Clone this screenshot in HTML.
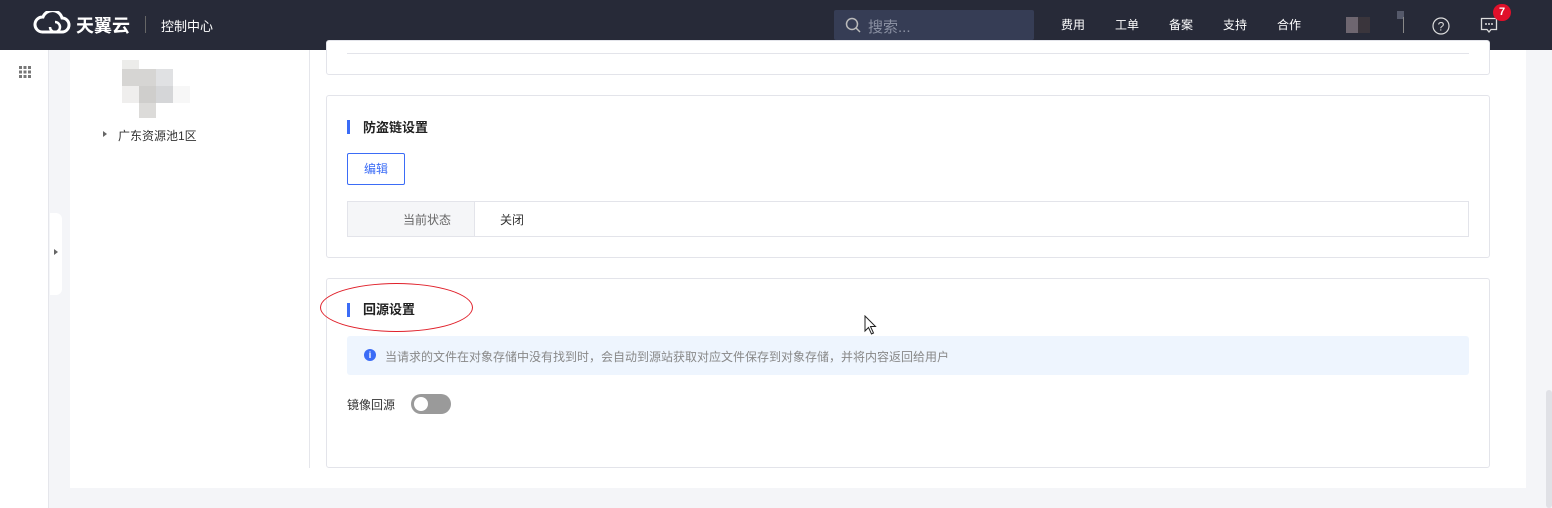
<!DOCTYPE html>
<html><head><meta charset="utf-8"><style>
*{box-sizing:border-box;margin:0;padding:0}
body{width:1552px;height:508px;overflow:hidden;background:#f4f5f8;font-family:"Liberation Sans","Noto Sans CJK SC",sans-serif;font-size:12px;color:#333;position:relative}
.a{position:absolute}
.hdr{left:0;top:0;width:1552px;height:50px;background:#272a38;color:#fff}
.box{border:1px solid #e3e4ea;border-radius:3px;background:#fff}
.t{font-size:13px;font-weight:bold;color:#222}
.bar{width:3px;height:14px;background:#3b6cf6}
</style></head><body>
<div class="a hdr">
 <svg class="a" style="left:32px;top:11px" width="40" height="24" viewBox="0 0 40 24"><path d="M10 21 H30 A7 7 0 0 0 30 7 A10 10 0 0 0 11 6 A7.5 7.5 0 0 0 10 21" fill="none" stroke="#fff" stroke-width="3"/><path d="M18 16 A5 5 0 1 0 23 11" fill="none" stroke="#fff" stroke-width="2.5"/></svg>
 <div class="a" style="left:76px;top:12px;font-size:18px;font-weight:bold">天翼云</div>
 <div class="a" style="left:145px;top:16px;width:1px;height:17px;background:#666"></div>
 <div class="a" style="left:161px;top:16px;font-size:13px">控制中心</div>
 <div class="a" style="left:834px;top:10px;width:200px;height:30px;background:#363d55;border-radius:2px"></div>
 <svg class="a" style="left:845px;top:17px" width="16" height="17"><circle cx="7" cy="7" r="5.5" fill="none" stroke="#bbb" stroke-width="1.5"/><line x1="11" y1="11" x2="15" y2="15" stroke="#bbb" stroke-width="1.5"/></svg>
 <div class="a" style="left:868px;top:16px;font-size:15px;color:#8a90a2">搜索...</div>
 <div class="a" style="left:1061px;top:16px;font-size:12px">费用</div>
 <div class="a" style="left:1115px;top:16px;font-size:12px">工单</div>
 <div class="a" style="left:1169px;top:16px;font-size:12px">备案</div>
 <div class="a" style="left:1223px;top:16px;font-size:12px">支持</div>
 <div class="a" style="left:1277px;top:16px;font-size:12px">合作</div>
 <div class="a" style="left:1346px;top:17px;width:12px;height:16px;background:#6e6670"></div>
 <div class="a" style="left:1358px;top:17px;width:12px;height:16px;background:#3a353c"></div>
 <div class="a" style="left:1397px;top:11px;width:7px;height:8px;background:#55596a"></div>
 <div class="a" style="left:1403px;top:17px;width:1px;height:16px;background:#888"></div>
 <svg class="a" style="left:1432px;top:17px" width="18" height="18"><circle cx="9" cy="9" r="8" fill="none" stroke="#ddd" stroke-width="1.2"/><text x="9" y="13.5" font-size="12" fill="#ddd" text-anchor="middle" font-family="Liberation Sans">?</text></svg>
 <svg class="a" style="left:1480px;top:17px" width="18" height="17"><path d="M1.5 1.5H16.5V12.5H11L9 15 7 12.5H1.5Z" fill="none" stroke="#ddd" stroke-width="1.3"/><circle cx="6" cy="7" r="1" fill="#ddd"/><circle cx="9" cy="7" r="1" fill="#ddd"/><circle cx="12" cy="7" r="1" fill="#ddd"/></svg>
 <div class="a" style="left:1493px;top:4px;width:18px;height:17px;border-radius:9px;background:#e0102a;font-size:11px;font-weight:bold;text-align:center;line-height:17px">7</div>
</div>
<div class="a" style="left:0;top:50px;width:49px;height:458px;background:#fff;border-right:1px solid #e5e6eb"></div>
<svg class="a" style="left:19px;top:66px" width="12" height="12" fill="#777"><rect x="0" y="0" width="3" height="3"/><rect x="4.5" y="0" width="3" height="3"/><rect x="9" y="0" width="3" height="3"/><rect x="0" y="4.5" width="3" height="3"/><rect x="4.5" y="4.5" width="3" height="3"/><rect x="9" y="4.5" width="3" height="3"/><rect x="0" y="9" width="3" height="3"/><rect x="4.5" y="9" width="3" height="3"/><rect x="9" y="9" width="3" height="3"/></svg>
<div class="a" style="left:50px;top:213px;width:12px;height:82px;background:#fff;border-radius:0 6px 6px 0"></div>
<div class="a" style="left:54px;top:249px;border-left:4px solid #666;border-top:3px solid transparent;border-bottom:3px solid transparent"></div>
<div class="a" style="left:70px;top:50px;width:1456px;height:438px;background:#fff"></div>
<div class="a" style="left:309px;top:50px;width:1px;height:418px;background:#e5e6eb"></div>
<div class="a" style="left:122px;top:60px;width:17px;height:9px;background:#ececea"></div>
<div class="a" style="left:122px;top:69px;width:34px;height:17px;background:#d6d5d3"></div>
<div class="a" style="left:156px;top:69px;width:17px;height:17px;background:#e0e1e3"></div>
<div class="a" style="left:122px;top:86px;width:17px;height:17px;background:#efeeed"></div>
<div class="a" style="left:139px;top:86px;width:17px;height:17px;background:#cfcecc"></div>
<div class="a" style="left:156px;top:86px;width:17px;height:17px;background:#d5d6d8"></div>
<div class="a" style="left:173px;top:86px;width:17px;height:17px;background:#f7f7f7"></div>
<div class="a" style="left:139px;top:103px;width:17px;height:15px;background:#dcdbd9"></div>
<div class="a" style="left:103px;top:131px;border-left:4px solid #666;border-top:3px solid transparent;border-bottom:3px solid transparent"></div>
<div class="a" style="left:118px;top:127px">广东资源池1区</div>
<div class="a box" style="left:326px;top:40px;width:1164px;height:35px"></div>
<div class="a" style="left:347px;top:53px;width:1122px;height:1px;background:#e3e4ea"></div>
<div class="a box" style="left:326px;top:95px;width:1164px;height:163px"></div>
<div class="a bar" style="left:347px;top:120px"></div>
<div class="a t" style="left:363px;top:117px">防盗链设置</div>
<div class="a" style="left:347px;top:153px;width:58px;height:32px;border:1px solid #3b6cf6;border-radius:2px;color:#3b6cf6;text-align:center;line-height:30px">编辑</div>
<div class="a" style="left:347px;top:201px;width:1122px;height:36px;border:1px solid #e3e4ea"></div>
<div class="a" style="left:348px;top:202px;width:127px;height:34px;background:#f5f6f8;border-right:1px solid #e3e4ea"></div>
<div class="a" style="left:403px;top:211px;color:#666">当前状态</div>
<div class="a" style="left:500px;top:211px">关闭</div>
<div class="a box" style="left:326px;top:278px;width:1164px;height:190px"></div>
<div class="a bar" style="left:347px;top:303px"></div>
<div class="a t" style="left:363px;top:299px">回源设置</div>
<div class="a" style="left:320px;top:283px;width:153px;height:49px;border:1.5px solid #e0202a;border-radius:50%"></div>
<div class="a" style="left:347px;top:336px;width:1122px;height:39px;background:#eef5fe;border-radius:3px"></div>
<div class="a" style="left:364px;top:349px;width:12px;height:12px;border-radius:50%;background:#3b6cf6;color:#fff;font-size:9px;font-weight:bold;text-align:center;line-height:12px">i</div>
<div class="a" style="left:385px;top:348px;color:#888">当请求的文件在对象存储中没有找到时，会自动到源站获取对应文件保存到对象存储，并将内容返回给用户</div>
<div class="a" style="left:347px;top:396px">镜像回源</div>
<div class="a" style="left:411px;top:394px;width:40px;height:20px;border-radius:10px;background:#9a9a9a"></div>
<div class="a" style="left:414px;top:397px;width:14px;height:14px;border-radius:50%;background:#fff"></div>
<svg class="a" style="left:864px;top:315px" width="14" height="20"><path d="M1 1V16L4.5 12.5 7.5 19 9.5 18 6.5 11.5H11.5Z" fill="#fff" stroke="#222"/></svg>
<div class="a" style="left:1546px;top:390px;width:6px;height:118px;background:#e0e1e6;border-radius:3px"></div>
</body></html>
